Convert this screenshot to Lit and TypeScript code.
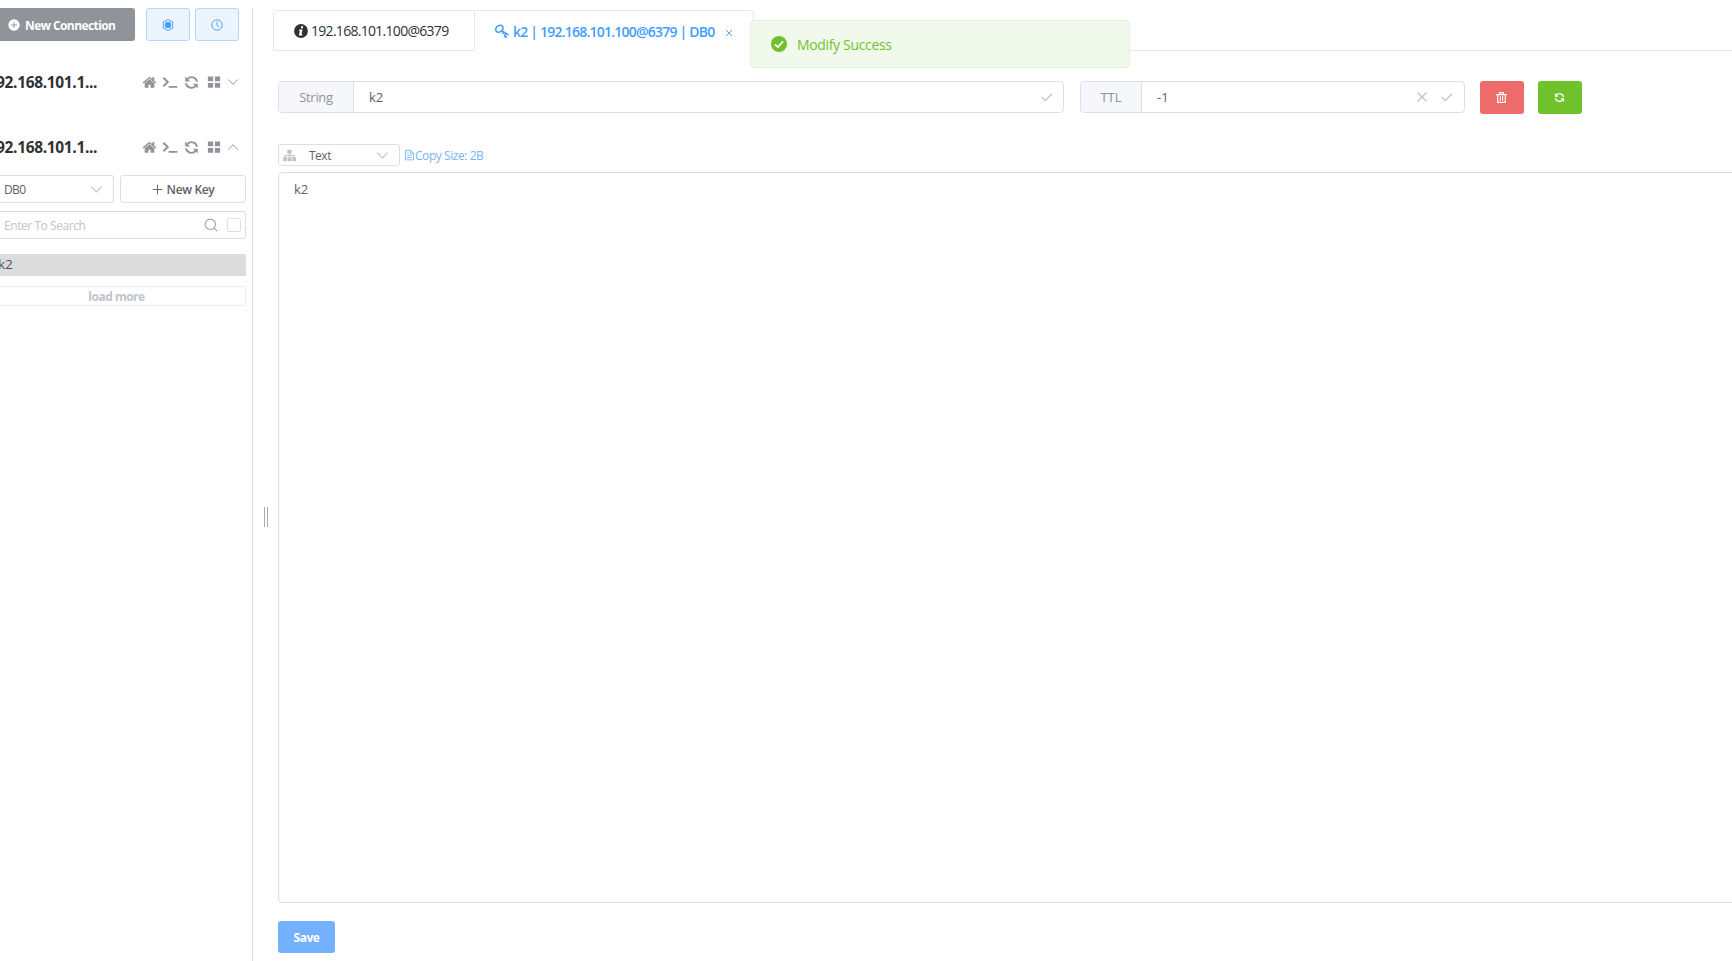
import { LitElement, html, css, svg } from "lit";
import { customElement, property } from "lit/decorators.js";

const solid = {
  plusCircle: svg`<circle cx="8" cy="8" r="7.6" fill="currentColor"/><path d="M8 4v8M4 8h8" stroke="#909399" stroke-width="1.3"/>`,
  gear: svg`<circle cx="8" cy="8" r="4.3" fill="currentColor"/><path d="M5.2 2.6 6.4 1h3.2l1.2 1.6 2.1.1L14.6 5.5 14 8l.6 2.5-1.7 2.8-2.1.1L9.6 15H6.4l-1.2-1.6-2.1-.1-1.7-2.8L2 8l-.6-2.5 1.7-2.8z" fill="none" stroke="currentColor" stroke-width="1.3"/>`,
  clock: svg`<circle cx="8" cy="8" r="6.9" fill="none" stroke="currentColor" stroke-width="1.2"/><path d="M8 3.6V8l2.3 3" fill="none" stroke="currentColor" stroke-width="1.2"/>`,
  home: svg`<path transform="scale(.00893)" fill="currentColor" d="M1472 992v480q0 26-19 45t-45 19h-384v-384h-256v384h-384q-26 0-45-19t-19-45v-480q0-1 .5-3t.5-3l575-474 575 474q1 2 1 6zm223-69l-62 74q-8 9-21 11h-3q-13 0-21-7l-692-577-692 577q-12 8-24 7-13-2-21-11l-62-74q-8-10-7-23.5t11-21.5l719-599q32-26 76-26t76 26l244 204v-195q0-14 9-23t23-9h192q14 0 23 9t9 23v408l219 182q10 8 11 21.5t-7 23.5z"/>`,
  terminal: svg`<path d="M1 3.2 6 8l-5 4.8" fill="none" stroke="currentColor" stroke-width="2.3"/><path d="M7 13.6h10" stroke="currentColor" stroke-width="2"/>`,
  refresh: svg`<path d="M3.6 4.4A6 6 0 0 1 14 7.2M12.4 11.6A6 6 0 0 1 2 8.8" fill="none" stroke="currentColor" stroke-width="1.9"/><path d="M1.3 1.6v5.2h5.2zM14.7 14.4V9.2H9.5z" fill="currentColor"/>`,
  grid: svg`<path d="M1 1.6h6v5.5H1zM9 1.6h6v5.5H9zM1 9h6v5.5H1zM9 9h6v5.5H9z" fill="currentColor"/>`,
  down: svg`<path d="m1.6 4.6 6.4 6.4 6.4-6.4" fill="none" stroke="currentColor" stroke-width="1.3"/>`,
  up: svg`<path d="m1.6 11.4 6.4-6.4 6.4 6.4" fill="none" stroke="currentColor" stroke-width="1.3"/>`,
  plus: svg`<path d="M8 1v14M1 8h14" stroke="currentColor" stroke-width="1.4"/>`,
  search: svg`<circle cx="7.2" cy="7.2" r="5.9" fill="none" stroke="currentColor" stroke-width="1.3"/><path d="m11.4 11.4 3.7 3.7" stroke="currentColor" stroke-width="1.3"/>`,
  info: svg`<circle cx="8" cy="8" r="7.9" fill="currentColor"/><path d="M8.2 2.7h2.4l-.5 2.2H7.7zM6 6.2h3.8l-1.3 5.2h1.1l-.4 1.6H5.5l1.3-5.2H5.6z" fill="#fff"/>`,
  key: svg`<ellipse cx="5" cy="5.4" rx="4.5" ry="3.5" transform="rotate(-38 5 5.4)" fill="none" stroke="currentColor" stroke-width="1.9"/><path d="m7.6 7.6 7.8 5M9.6 9.2l-1 2.4M12.2 10.8l-1.2 3.4 2.6 1" fill="none" stroke="currentColor" stroke-width="1.9"/>`,
  close: svg`<path d="m2 2 12 12M14 2 2 14" stroke="currentColor" stroke-width="1.7"/>`,
  check: svg`<path d="m1.2 8.3 4.6 4.5 9-9.4" fill="none" stroke="currentColor" stroke-width="1.7"/>`,
  success: svg`<circle cx="8" cy="8" r="8" fill="currentColor"/><path d="m4 8.3 2.9 2.7 5.2-5.6" fill="none" stroke="#fff" stroke-width="1.7"/>`,
  trash: svg`<path d="M.2 3.7h15.6M5.2 3.4V1h5.6v2.4M2.5 4v11.2h11V4M6.4 6.2v6.4M9.6 6.2v6.4" fill="none" stroke="currentColor" stroke-width="1.7"/>`,
  tree: svg`<path d="M5.4 .8h5.2v5H5.4zM.2 10h4.8v5.2H.2zM5.7 10h4.8v5.2H5.7zM11.2 10h4.8v5.2h-4.8z" fill="currentColor"/><path d="M8 5v6M2.6 11V8h10.8v3" fill="none" stroke="currentColor" stroke-width="1.5"/>`,
  doc: svg`<path d="M2.2 1h7.3l4.3 4.3V15H2.2zM9.2 1v4.6h4.6M4.6 8.4h6.8M4.6 11.7h6.8M4.6 5.2h2.4" fill="none" stroke="currentColor" stroke-width="1.3"/>`,
};

type IconName = keyof typeof solid;

@customElement("ui-icon")
export class UiIcon extends LitElement {
  @property() name: IconName = "plus";
  static styles = css`
    :host { display: block; flex: none; width: 14px; height: 14px; }
    svg { display: block; width: 100%; height: 100%; overflow: visible; }
  `;
  render() {
    return html`<svg viewBox="0 0 16 16">${solid[this.name]}</svg>`;
  }
}

@customElement("connection-row")
export class ConnectionRow extends LitElement {
  @property() label = "";
  @property({ type: Boolean }) open = false;
  static styles = css`
    :host { display: flex; align-items: center; height: 20px; color: #909399; }
    .name { width: 146px; margin-left: -4px; padding-top: 2px; color: #303133; font-weight: 700; font-size: 15.5px; letter-spacing: -0.34px; white-space: nowrap; }
    .home { width: 15px; height: 15px; }
    .term { width: 15px; height: 14px; margin-left: 5px; }
    .sync { width: 15px; height: 15px; margin-left: 7px; }
    .grid { margin-left: 8px; }
    .arrow { width: 12px; height: 12px; margin-left: 6px; }
  `;
  render() {
    return html`
      <span class="name">${this.label}</span>
      <ui-icon class="home" name="home"></ui-icon>
      <ui-icon class="term" name="terminal"></ui-icon>
      <ui-icon class="sync" name="refresh"></ui-icon>
      <ui-icon class="grid" name="grid"></ui-icon>
      <ui-icon class="arrow" name=${this.open ? "up" : "down"}></ui-icon>
    `;
  }
}

@customElement("app-root")
export class AppRoot extends LitElement {
  static styles = css`
    :host {
      display: flex; width: 1732px; height: 961px; overflow: hidden; position: relative;
      background: #fff; color: #606266; font: 13px "Open Sans", "Noto Sans", sans-serif; line-height: 1;
    }
    * { box-sizing: border-box; }
    span { white-space: nowrap; }
    .side { width: 253px; margin-top: 8px; border-right: 1px solid #dcdfe6; flex: none; }
    .top { display: flex; height: 33px; }
    .new { display: flex; align-items: center; width: 135px; padding-left: 8px; gap: 5px; background: #909399; color: #fff; border-radius: 0 3px 3px 0; font-size: 12px; font-weight: 700; letter-spacing: -0.58px; margin-right: 11px; }
    .new ui-icon { width: 12px; height: 12px; }
    .sq { display: flex; align-items: center; justify-content: center; width: 44px; background: #ecf5ff; border: 1px solid #b3d8ff; border-radius: 3px; color: #409eff; margin-right: 5px; }
    .sq ui-icon { width: 12px; height: 12px; }
    .first { margin-top: 31px; }
    .second { margin-top: 45px; }
    .line { display: flex; margin-top: 18px; gap: 6px; height: 28px; }
    .db { display: flex; align-items: center; justify-content: space-between; width: 114px; padding: 0 10px 0 4px; border: 1px solid #dcdfe6; border-left: 0; border-radius: 0 3px 3px 0; font-size: 12px; letter-spacing: -0.6px; }
    .db span, .nk span, .find span, .more span, .new span, .fmt span, .copy span, .save span, .toast span { padding-top: 2px; }
    .db ui-icon, .fmt .arr { width: 13px; height: 13px; color: #c0c4cc; }
    .nk { display: flex; align-items: center; justify-content: center; width: 126px; gap: 4px; border: 1px solid #dcdfe6; border-radius: 3px; font-size: 12px; font-weight: 600; letter-spacing: -0.35px; }
    .nk ui-icon { width: 11px; height: 11px; }
    .find { display: flex; align-items: center; width: 246px; height: 28px; margin-top: 8px; padding: 0 4px; border: 1px solid #dcdfe6; border-left: 0; border-radius: 0 3px 3px 0; color: #c0c4cc; font-size: 12px; letter-spacing: -0.44px; }
    .find span { flex: 1; }
    .find ui-icon { color: #a0a3a8; }
    .box { width: 14px; height: 14px; margin-left: 9px; border: 1px solid #dcdfe6; border-radius: 2px; }
    .item { display: flex; align-items: center; width: 246px; height: 22px; margin-top: 15px; background: #dcdcdc; font-size: 13.5px; color: #505255; }
    .item span { margin-left: -2px; }
    .more { display: flex; align-items: center; justify-content: center; width: 246px; height: 20px; margin-top: 10px; padding-right: 12px; border: 1px solid #ebeef5; border-left: 0; border-radius: 0 3px 3px 0; color: #c0c4cc; font-size: 12px; font-weight: 700; letter-spacing: -0.5px; }
    .grip { flex: none; width: 4px; height: 20px; margin: 507px 5px 0 11px; border: solid #aaa; border-width: 0 1px; }
    .main { flex: 1; min-width: 0; padding-top: 10px; }
    .tabs { display: flex; height: 41px; }
    .tab { display: flex; align-items: center; border: 1px solid #e4e7ed; font-size: 14px; color: #303133; }
    .tab span { padding-top: 1px; }
    .t1 { width: 202px; padding-left: 20px; gap: 3px; border-radius: 4px 0 0 0; font-weight: 500; letter-spacing: -0.71px; }
    .t2 { width: 279px; padding-left: 20px; gap: 4px; border-left: 0; border-bottom: 0; border-radius: 0 4px 0 0; color: #409eff; font-weight: 600; letter-spacing: -0.78px; }
    .t2 .x { width: 8px; height: 8px; margin: 4px 0 0 7px; }
    .rest { flex: 1; border-bottom: 1px solid #e4e7ed; }
    .fields { display: flex; margin: 30px 0 0 5px; height: 33px; }
    .field { display: flex; height: 32px; border: 1px solid #dcdfe6; border-radius: 4px; align-items: stretch; }
    .kf { width: 786px; margin-right: 16px; }
    .tf { width: 385px; margin-right: 15px; }
    .pre { display: flex; align-items: center; justify-content: center; width: 75px; background: #f5f7fa; border-right: 1px solid #dcdfe6; color: #909399; border-radius: 3px 0 0 3px; }
    .pre span, .val span { padding-top: 1px; }
    .kf .pre { letter-spacing: -0.3px; }
    .tf .pre { width: 61px; }
    .val { display: flex; flex: 1; align-items: center; padding: 0 10px 0 15px; }
    .tf .val { padding-right: 11px; }
    .val span { flex: 1; }
    .val ui-icon { width: 12px; height: 12px; color: #c0c4cc; margin-left: 13px; }
    .act { display: flex; align-items: center; justify-content: center; width: 44px; height: 33px; border-radius: 3px; color: #fff; padding-right: 1px; }
    .act ui-icon { width: 11px; height: 11px; }
    .del { background: #ed6b6b; margin-right: 14px; }
    .ref { background: #70c22c; }
    .format { display: flex; align-items: center; margin: 30px 0 0 5px; height: 22px; font-size: 12px; }
    .fmt { display: flex; align-items: center; width: 122px; height: 22px; padding: 0 10px 0 4px; border: 1px solid #dcdfe6; border-radius: 3px; }
    .fmt span { flex: 1; margin-left: 13px; letter-spacing: -0.5px; }
    .fmt .tree { width: 13px; height: 13px; color: #c0c4cc; }
    .copy { display: flex; align-items: center; margin-left: 4px; color: #79b4f7; letter-spacing: -0.44px; }
    .copy ui-icon { width: 11px; height: 12px; }
    .area { height: 731px; margin: 6px -6px 0 5px; padding: 10px 15px; border: 1px solid #dcdfe6; border-radius: 4px; }
    .save { display: flex; align-items: center; justify-content: center; width: 57px; height: 32px; margin: 18px 0 0 5px; border-radius: 3px; background: #73b1ff; color: #fff; font-size: 12px; font-weight: 700; letter-spacing: -0.5px; }
    .toast { position: absolute; left: 750px; top: 20px; display: flex; align-items: center; width: 380px; height: 48px; padding-left: 20px; gap: 10px; background: #f0f9eb; border: 1px solid #e1f3d8; border-radius: 4px; color: #70c22c; font-size: 14px; letter-spacing: -0.34px; }
    .toast ui-icon { width: 16px; height: 16px; }
  `;

  render() {
    return html`
      <aside class="side">
        <div class="top">
          <div class="new"><ui-icon name="plusCircle"></ui-icon><span>New Connection</span></div>
          <div class="sq"><ui-icon name="gear"></ui-icon></div>
          <div class="sq"><ui-icon name="clock"></ui-icon></div>
        </div>
        <connection-row class="first" label="92.168.101.1..."></connection-row>
        <connection-row class="second" label="92.168.101.1..." open></connection-row>
        <div class="line">
          <div class="db"><span>DB0</span><ui-icon name="down"></ui-icon></div>
          <div class="nk"><ui-icon name="plus"></ui-icon><span>New Key</span></div>
        </div>
        <div class="find"><span>Enter To Search</span><ui-icon name="search"></ui-icon><i class="box"></i></div>
        <div class="item"><span>k2</span></div>
        <div class="more"><span>load more</span></div>
      </aside>
      <div class="grip"></div>
      <main class="main">
        <div class="tabs">
          <div class="tab t1"><ui-icon name="info"></ui-icon><span>192.168.101.100@6379</span></div>
          <div class="tab t2"><ui-icon name="key"></ui-icon><span>k2 | 192.168.101.100@6379 | DB0</span><ui-icon class="x" name="close"></ui-icon></div>
          <div class="rest"></div>
        </div>
        <div class="fields">
          <div class="field kf"><div class="pre"><span>String</span></div><div class="val"><span>k2</span><ui-icon name="check"></ui-icon></div></div>
          <div class="field tf"><div class="pre"><span>TTL</span></div><div class="val"><span>-1</span><ui-icon name="close"></ui-icon><ui-icon name="check"></ui-icon></div></div>
          <div class="act del"><ui-icon name="trash"></ui-icon></div>
          <div class="act ref"><ui-icon name="refresh"></ui-icon></div>
        </div>
        <div class="format">
          <div class="fmt"><ui-icon class="tree" name="tree"></ui-icon><span>Text</span><ui-icon class="arr" name="down"></ui-icon></div>
          <div class="copy"><ui-icon name="doc"></ui-icon><span>Copy Size: 2B</span></div>
        </div>
        <div class="area">k2</div>
        <div class="save"><span>Save</span></div>
      </main>
      <div class="toast"><ui-icon name="success"></ui-icon><span>Modify Success</span></div>
    `;
  }
}
